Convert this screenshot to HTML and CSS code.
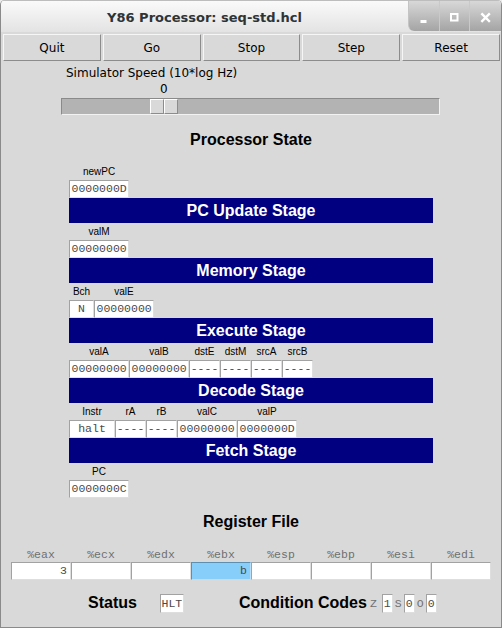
FILE: index.html
```html
<!DOCTYPE html>
<html>
<head>
<meta charset="utf-8">
<title>Y86 Processor: seq-std.hcl</title>
<link rel="stylesheet" href="styles.css">
</head>
<body>
<div class="window">
  <header class="titlebar">
    <div class="title">Y86 Processor: seq-std.hcl</div>
    <div class="wm">
      <span class="wm-btn"><svg width="30" height="31" viewBox="0 0 30 31"><rect x="11.5" y="19" width="6" height="3" fill="#fff"/></svg></span>
      <span class="wm-btn sep"><svg width="30" height="31" viewBox="0 0 30 31"><rect x="11" y="13" width="6.5" height="6.5" fill="none" stroke="#fff" stroke-width="2"/></svg></span>
      <span class="wm-btn sep last"><svg width="31" height="31" viewBox="0 0 31 31"><path d="M12.2 13.2 L19 20 M19 13.2 L12.2 20" stroke="#fff" stroke-width="2.4" stroke-linecap="square"/></svg></span>
    </div>
  </header>

  <div class="toolbar">
    <button class="btn">Quit</button>
    <button class="btn">Go</button>
    <button class="btn">Stop</button>
    <button class="btn">Step</button>
    <button class="btn">Reset</button>
  </div>

  <div class="speed">
    <div class="speed-label">Simulator Speed (10*log Hz)</div>
    <div class="speed-value">0</div>
    <div class="trough"><div class="thumb"><span class="half"></span><span class="half"></span></div></div>
  </div>

  <h2 class="heading">Processor State</h2>

  <div class="stages">
    <div class="fields">
      <div class="col"><div class="lbl">newPC</div><div class="box w8">0000000D</div></div>
    </div>
    <div class="bar">PC Update Stage</div>

    <div class="fields">
      <div class="col"><div class="lbl">valM</div><div class="box w8">00000000</div></div>
    </div>
    <div class="bar">Memory Stage</div>

    <div class="fields">
      <div class="col"><div class="lbl">Bch</div><div class="box wbch">N</div></div>
      <div class="col"><div class="lbl">valE</div><div class="box w8">00000000</div></div>
    </div>
    <div class="bar">Execute Stage</div>

    <div class="fields">
      <div class="col"><div class="lbl">valA</div><div class="box w8">00000000</div></div>
      <div class="col"><div class="lbl">valB</div><div class="box w8">00000000</div></div>
      <div class="col"><div class="lbl">dstE</div><div class="box w4">----</div></div>
      <div class="col"><div class="lbl">dstM</div><div class="box w4">----</div></div>
      <div class="col"><div class="lbl">srcA</div><div class="box w4">----</div></div>
      <div class="col"><div class="lbl">srcB</div><div class="box w4">----</div></div>
    </div>
    <div class="bar">Decode Stage</div>

    <div class="fields">
      <div class="col"><div class="lbl">Instr</div><div class="box winstr">halt</div></div>
      <div class="col"><div class="lbl">rA</div><div class="box w4">----</div></div>
      <div class="col"><div class="lbl">rB</div><div class="box w4">----</div></div>
      <div class="col"><div class="lbl">valC</div><div class="box w8">00000000</div></div>
      <div class="col"><div class="lbl">valP</div><div class="box w8">0000000D</div></div>
    </div>
    <div class="bar">Fetch Stage</div>

    <div class="fields">
      <div class="col"><div class="lbl">PC</div><div class="box w8">0000000C</div></div>
    </div>
  </div>

  <h2 class="heading reg-heading">Register File</h2>

  <div class="regs">
    <div class="reg"><div class="reg-name">%eax</div><div class="reg-val">3</div></div>
    <div class="reg"><div class="reg-name">%ecx</div><div class="reg-val"></div></div>
    <div class="reg"><div class="reg-name">%edx</div><div class="reg-val"></div></div>
    <div class="reg"><div class="reg-name">%ebx</div><div class="reg-val hl">b</div></div>
    <div class="reg"><div class="reg-name">%esp</div><div class="reg-val"></div></div>
    <div class="reg"><div class="reg-name">%ebp</div><div class="reg-val"></div></div>
    <div class="reg"><div class="reg-name">%esi</div><div class="reg-val"></div></div>
    <div class="reg"><div class="reg-name">%edi</div><div class="reg-val"></div></div>
  </div>

  <div class="status">
    <span class="status-title">Status</span>
    <span class="box hlt">HLT</span>
    <span class="status-title cc-title">Condition Codes</span>
    <span class="cc-lbl first">Z</span><span class="box cc-box">1</span>
    <span class="cc-lbl">S</span><span class="box cc-box">0</span>
    <span class="cc-lbl">O</span><span class="box cc-box">0</span>
  </div>
</div>
</body>
</html>
```

FILE: styles.css
```css
* {
  box-sizing: border-box;
}

html,
body {
  margin: 0;
  padding: 0;
}

body {
  width: 502px;
  height: 628px;
  background: #ececec;
  font-family: "DejaVu Sans", sans-serif;
  overflow: hidden;
}

.window {
  width: 502px;
  height: 628px;
  background: #d9d9d9;
  border: 1px solid #8a8a8a;
  border-top: none;
  border-radius: 5px 5px 0 0;
  overflow: hidden;
}

/* ---------- title bar ---------- */
.titlebar {
  display: flex;
  height: 32px;
  background: linear-gradient(#fafafa, #e3e3e3);
  border-top: 1px solid #bdbdbd;
}

.title {
  flex: 1;
  text-align: center;
  font: bold 13px/27px "DejaVu Sans", sans-serif;
  padding-top: 3px;
  color: #2e3436;
}

.wm {
  display: flex;
  height: 30px;
  background: linear-gradient(#d8d8d8, #a4a4a4);
  border-bottom-left-radius: 6px;
  border-left: 1px solid #c4c4c4;
  overflow: hidden;
}

.wm-btn {
  display: block;
  width: 30px;
  height: 30px;
}

.wm-btn svg {
  display: block;
}

.wm-btn.sep {
  border-left: 1px solid #c9c9c9;
}

.wm-btn.last {
  width: 32px;
}

/* ---------- toolbar ---------- */
.toolbar {
  display: grid;
  grid-template-columns: repeat(5, 1fr);
  gap: 2px;
  padding: 2px 1px 0 2px;
}

.btn {
  height: 27px;
  margin: 0;
  padding: 0;
  font: 12px "DejaVu Sans", sans-serif;
  color: #000;
  background: #d9d9d9;
  border: 1px solid;
  border-color: #f6f6f6 #8c8c8c #8c8c8c #f6f6f6;
  border-radius: 0;
}

/* ---------- speed scale ---------- */
.speed {
  padding-top: 4px;
  font: 12px/16px "DejaVu Sans", sans-serif;
  color: #000;
}

.speed-label {
  padding-left: 65px;
}

.speed-value {
  padding-left: 159px;
}

.trough {
  display: flex;
  margin: 1px 0 0 60px;
  width: 379px;
  height: 17px;
  background: #b3b3b3;
  border: 1px solid;
  border-color: #8a8a8a #f2f2f2 #f2f2f2 #8a8a8a;
}

.thumb {
  display: flex;
  margin-left: 88px;
  height: 15px;
}

.half {
  width: 14px;
  height: 15px;
  background: #d9d9d9;
  border: 1px solid;
  border-color: #ffffff #8c8c8c #8c8c8c #ffffff;
}

/* ---------- headings ---------- */
.heading {
  margin: 15px 0 13px;
  font: bold 16px/20px "Liberation Sans", Arial, sans-serif;
  text-align: center;
  color: #000;
}

.reg-heading {
  margin: 14px 0 0;
}

/* ---------- stages ---------- */
.stages {
  padding-left: 68px;
}

.fields {
  display: flex;
}

.col {
  display: flex;
  flex-direction: column;
}

.lbl {
  height: 17px;
  font: 10px/17px "Liberation Sans", Arial, sans-serif;
  text-align: center;
  white-space: nowrap;
  color: #000;
}

.box {
  display: block;
  height: 18px;
  background: #fff;
  border: 1px solid;
  border-color: #a2a2a2 #dedede #dedede #a2a2a2;
  font: 11.5px/16px "Liberation Mono", "Courier New", monospace;
  color: #4a4a4a;
  white-space: nowrap;
  overflow: hidden;
}

.w8 {
  width: 60px;
  padding-left: 1.5px;
}

.w4 {
  width: 31px;
  text-align: center;
}

.winstr {
  width: 46px;
  text-align: center;
}

.wbch {
  width: 25px;
  text-align: center;
}

.bar {
  width: 364px;
  height: 25px;
  background: #000080;
  color: #fff;
  font: bold 16px/25px "Liberation Sans", Arial, sans-serif;
  text-align: center;
}

/* ---------- register file ---------- */
.regs {
  display: grid;
  grid-template-columns: repeat(8, 60px);
  padding-left: 10px;
  margin-top: 15px;
}

.reg-name {
  font: 11.5px/15px "Liberation Mono", "Courier New", monospace;
  color: #707070;
  text-align: center;
}

.reg-val {
  height: 18px;
  background: #fff;
  border: 1px solid;
  border-color: #a2a2a2 #dedede #dedede #a2a2a2;
  font: 11.5px/16px "Liberation Mono", "Courier New", monospace;
  color: #4a4a4a;
  text-align: right;
  padding-right: 3px;
}

.reg-val.hl {
  background: #87cefa;
  border-color: #5d8fb0 #b9e0f8 #b9e0f8 #5d8fb0;
}

/* ---------- status row ---------- */
.status {
  display: flex;
  align-items: center;
  height: 20px;
  margin-top: 13px;
  padding-left: 87px;
}

.status-title {
  font: bold 16px/20px "Liberation Sans", Arial, sans-serif;
  color: #000;
}

.hlt {
  margin-left: 23px;
  width: 24px;
  height: 19px;
  text-align: center;
  line-height: 17px;
}

.cc-title {
  margin-left: 55px;
}

.cc-lbl {
  margin: 0 2px;
  font: 11.5px/19px "Liberation Mono", "Courier New", monospace;
  color: #707070;
}

.cc-lbl.first {
  margin-left: 3px;
  margin-right: 5px;
}

.cc-box {
  width: 11px;
  height: 19px;
  text-align: center;
  line-height: 17px;
}
```
